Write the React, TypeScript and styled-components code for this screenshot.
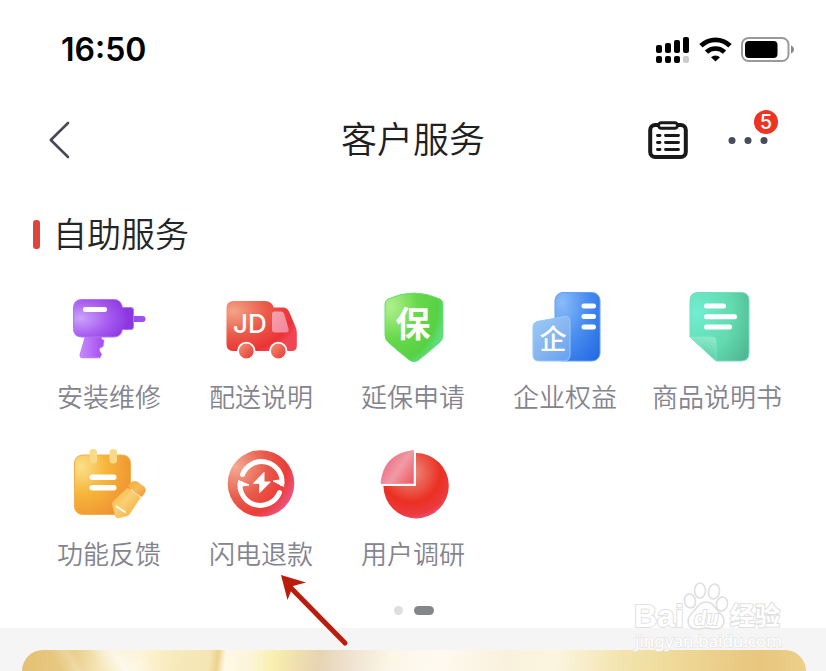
import React from "react";
import styled, { createGlobalStyle } from "styled-components";

const GlobalStyle = createGlobalStyle`
  * { box-sizing: border-box; }
  body {
    margin: 0;
    background: #f5f5f5;
    font-family: "Noto Sans CJK SC", "Noto Sans", sans-serif;
  }
  button { border: 0; padding: 0; background: none; font: inherit; color: inherit; cursor: pointer; }
  svg { display: block; overflow: visible; }
`;

const Page = styled.div`
  position: relative;
  display: flex;
  flex-direction: column;
  min-height: 100vh;
  overflow: hidden;
`;

const Sheet = styled.main`
  background: #fff;
  padding-bottom: 13px;
`;

const StatusBar = styled.div`
  display: flex;
  align-items: center;
  justify-content: space-between;
  height: 100px;
  padding: 0 31px 0 61px;
`;

const Clock = styled.time`
  font: 600 32px/40px Inter, sans-serif;
  font-feature-settings: "case";
  color: #000;
`;

const StatusIcons = styled.div`
  display: flex;
  align-items: center;
  gap: 9px;
`;

const NavBar = styled.header`
  display: grid;
  grid-template-columns: 1fr auto 1fr;
  align-items: center;
  height: 80px;
  padding: 0 48px;
`;

const BackButton = styled.button`
  justify-self: start;
`;

const Title = styled.h1`
  margin: 0;
  padding-bottom: 6px;
  font-size: 36px;
  line-height: 48px;
  font-weight: 350;
  color: #1f1f1f;
`;

const NavActions = styled.div`
  display: flex;
  align-items: center;
  justify-content: flex-end;
  gap: 40px;
  padding-right: 10px;
`;

const MoreButton = styled.button`
  position: relative;
`;

const Badge = styled.span`
  position: absolute;
  top: -26px;
  right: -10px;
  width: 24px;
  height: 24px;
  border-radius: 50%;
  background: #ee3323;
  color: #fff;
  font: 500 20px/24px Inter, sans-serif;
  text-align: center;
`;

const SectionTitle = styled.h2`
  display: flex;
  align-items: center;
  gap: 13px;
  height: 107px;
  margin: 0;
  padding: 2px 33px 0;
  font-size: 34px;
  font-weight: 350;
  line-height: 44px;
  color: #242526;

  &::before {
    content: "";
    width: 7px;
    height: 29px;
    border-radius: 3px;
    background: #e1433d;
  }
`;

const SectionText = styled.span`
  padding-bottom: 4px;
`;

const ServiceGrid = styled.div`
  display: grid;
  grid-template-columns: repeat(5, 1fr);
  row-gap: 30px;
  padding: 0 33px;
`;

const Service = styled.button`
  display: flex;
  flex-direction: column;
  align-items: center;
  gap: 11px;
`;

const ServiceLabel = styled.span`
  font-size: 26px;
  line-height: 36px;
  font-weight: 350;
  color: #84848f;
  white-space: nowrap;
`;

const Pager = styled.div`
  display: flex;
  justify-content: center;
  gap: 11px;
  margin-top: 35px;
  padding-left: 2px;
`;

const PagerDot = styled.button<{ $active?: boolean }>`
  width: ${(p) => (p.$active ? 20 : 9)}px;
  height: 9px;
  border-radius: 5px;
  background: ${(p) => (p.$active ? "#858688" : "#dedede")};
`;

const BannerArea = styled.section`
  display: flex;
  flex: 1;
  padding: 22px 20px 0 22px;
`;

const Banner = styled.div`
  flex: 1;
  min-height: 20px;
  border-radius: 22px 22px 0 0;
  background:
    linear-gradient(58deg, transparent 0 5%, #fff3 7%, transparent 8% 10%, #fff9 13%, transparent 17%),
    linear-gradient(97deg,
      #e3c173 0%, #e8ca83 6%, #f5e5b5 10%, #fcf4d5 15%, #f7e9ba 20%, #f5e5b4 24%,
      #ecd38c 25%, #fff8e5 26%, #fcf5dc 29%, #f9f0ae 32%, #efdfae 35%, #e6d4b4 38%,
      #efe3d0 42%, #fbf6e7 47%, #fffaf0 53%, #f9f1dc 62%, #fbf5df 68%,
      #f3e4b0 76%, #efdc9c 82%, #ebce89 89%, #e8c67d 94%, #edd08b 100%);
`;

const ArrowOverlay = styled.svg`
  position: absolute;
  left: 281px;
  top: 574px;
  pointer-events: none;
`;

const Watermark = styled.svg`
  position: absolute;
  right: 40px;
  top: 580px;
  pointer-events: none;
`;

const Signal = () => (
  <svg width="34" height="26" viewBox="0 0 34 26" aria-label="信号" role="img">
    <rect x="0" y="8" width="6" height="8" rx="2" />
    <rect x="9" y="6" width="6" height="10" rx="2" />
    <rect x="18" y="3" width="6" height="13" rx="2" />
    <rect x="27" y="0" width="6" height="16" rx="2" />
    <rect x="0" y="19" width="6" height="7" rx="2" />
    <rect x="9" y="19" width="6" height="7" rx="2" />
    <rect x="18" y="19" width="6" height="7" rx="2" />
    <rect x="27" y="19" width="6" height="7" rx="2" fill="#ccc" />
  </svg>
);

const Wifi = () => (
  <svg width="33" height="26" viewBox="0 0 33 26" aria-label="无线网络" role="img">
    <path d="M2 8.800a20.500 20.500 0 0 1 29 0" fill="none" stroke="#000" strokeWidth="4.800" />
    <path d="M7.500 15.200a12.800 12.800 0 0 1 18 0" fill="none" stroke="#000" strokeWidth="4.600" />
    <path d="M12 20.200a6.800 6.800 0 0 1 9 0L16.500 24.600z" />
  </svg>
);

const Battery = () => (
  <svg width="54" height="26" viewBox="0 0 54 26" aria-label="电池" role="img">
    <rect x="1" y="1" width="46.500" height="23" rx="6.500" fill="none" stroke="#999" strokeWidth="2" />
    <rect x="4" y="4" width="32.500" height="17" rx="4" />
    <path d="M50 8.500v8c4-1.500 4-6.500 0-8z" fill="#888" />
  </svg>
);

const Clipboard = () => (
  <svg width="40" height="40" viewBox="0 0 40 40" fill="none" stroke="#191919" strokeLinecap="round">
    <rect x="2.200" y="5" width="35.600" height="32" rx="5" strokeWidth="4" />
    <rect x="10.500" y="2.800" width="19" height="5.400" rx="2.700" fill="#fff" strokeWidth="3" />
    <path d="M9.500 15.500h2.500M17.500 15.500h13M9.500 22.500h2.500M17.500 22.500h13M9.500 29.500h2.500M17.500 29.500h13" strokeWidth="2.900" />
  </svg>
);

const Drill = () => (
  <>
    <defs>
      <radialGradient id="drill" cx=".12" cy=".5" r=".8">
        <stop offset="0" stopColor="#cba3fb" /><stop offset=".55" stopColor="#a95ff0" /><stop offset="1" stopColor="#8b37e1" />
      </radialGradient>
      <linearGradient id="grip" x2="1"><stop stopColor="#c98bfb" /><stop offset="1" stopColor="#a34af0" /></linearGradient>
    </defs>
    <path d="M17 47h15.500v5l2.500 1.500-1 6-3.500 1.800v2.500l2 3.500-1.500 3.500H12.500q-2-.5-1.500-3z" fill="url(#grip)" stroke="#b56ef5" strokeWidth=".8" strokeLinejoin="round" />
    <rect x="60" y="29" width="16.500" height="6" rx="3" fill="#9d50ed" />
    <path d="M13 12.500h32q7 0 8.500 8H62q2.500 0 2.500 2.500v17q0 2.500-2.500 2.500h-8.500q-1.500 7.500-8.500 7.500H13q-8.500 0-8.500-8.500V21q0-8.500 8.500-8.500z" fill="url(#drill)" stroke="#b175f6" strokeWidth="1" />
    <rect x="14" y="20" width="24" height="5" rx="2.300" fill="#fff" />
  </>
);

const Truck = () => (
  <>
    <defs>
      <radialGradient id="truck" cx=".1" cy=".2" r=".95">
        <stop offset="0" stopColor="#f3a487" /><stop offset=".5" stopColor="#ea5a48" /><stop offset=".88" stopColor="#ec3236" /><stop offset="1" stopColor="#f04552" />
      </radialGradient>
      <linearGradient id="wheel" x2="1" y2="1"><stop stopColor="#f19a78" /><stop offset="1" stopColor="#e93030" /></linearGradient>
      <linearGradient id="pane" x2="1" y2="1"><stop stopColor="#f5a3ac" /><stop offset="1" stopColor="#f3849a" /></linearGradient>
    </defs>
    <path d="M13 14h31q7 0 8.500 6.500H62q4 0 6 4L75 41q.8 2 .8 5v13q0 5-5 5H12q-6.500 0-6.500-6.500V21q0-7 7.500-7z" fill="url(#truck)" />
    <path d="M53.500 24.500h6.500q2 0 3 2l4.500 15q1 4-3 4H54q-3 0-3-3V27q0-2.500 2.500-2.500z" fill="url(#pane)" />
    <g fill="url(#wheel)" stroke="#fff" strokeWidth="1.800">
      <circle cx="25.300" cy="64" r="8.300" /><circle cx="57.300" cy="64" r="8.300" />
    </g>
    <text x="12" y="46" fill="#fff" fontFamily="Inter, sans-serif" fontSize="26" fontWeight="500">JD</text>
  </>
);

const Shield = () => (
  <>
    <defs>
      <radialGradient id="shield" cx=".1" cy=".2" r=".95">
        <stop offset="0" stopColor="#b2f08d" /><stop offset=".5" stopColor="#67d84a" /><stop offset=".85" stopColor="#57d144" /><stop offset="1" stopColor="#60dc81" />
      </radialGradient>
    </defs>
    <path d="M15 12q13-6 26-6t26 6q3 1.500 3 5v31q0 5-4 8-10 9-21 17.500-4 2.500-8 0-11-8.500-21-17.500-4-3-4-8V17q0-3.500 3-5z" fill="url(#shield)" stroke="#6bdc78" strokeWidth="1" />
    <text x="40" y="50" fill="#fff" textAnchor="middle" fontSize="35" fontWeight="700">保</text>
  </>
);

const Building = () => (
  <>
    <defs>
      <radialGradient id="tower" cx=".15" cy=".15" r="1.100">
        <stop offset="0" stopColor="#8abcf7" /><stop offset=".5" stopColor="#4b8ff0" /><stop offset="1" stopColor="#266be3" />
      </radialGradient>
      <linearGradient id="annex" x2=".8" y2="1"><stop stopColor="#9acbf8" /><stop offset=".6" stopColor="#86b4ef" /><stop offset="1" stopColor="#68a5f4" /></linearGradient>
    </defs>
    <rect x="30" y="5.500" width="45" height="68.500" rx="8" fill="url(#tower)" stroke="#64a0f4" />
    <g fill="#fff"><rect x="56.500" y="16.500" width="14.500" height="5" rx="2.500" /><rect x="56.500" y="27" width="14.500" height="5" rx="2.500" /><rect x="56.500" y="37.500" width="14.500" height="5" rx="2.500" /></g>
    <path d="M12 34.500l27-5q6-1 6 5V68q0 6-6 6H14q-6 0-6-6V40q0-4.500 4-5.500z" fill="url(#annex)" stroke="#9ac7fa" />
    <text x="28" y="62" fill="#fff" textAnchor="middle" fontSize="27" fontWeight="500">企</text>
  </>
);

const Manual = () => (
  <>
    <defs>
      <radialGradient id="manual" cx=".1" cy=".3" r="1.050">
        <stop offset="0" stopColor="#70eed2" /><stop offset=".6" stopColor="#62d9ae" /><stop offset="1" stopColor="#50b894" />
      </radialGradient>
      <linearGradient id="fold" x1=".6" x2=".4" y2="1"><stop stopColor="#8be9c8" /><stop offset="1" stopColor="#58c9a5" /></linearGradient>
    </defs>
    <path d="M21 5.500h43q8 0 8 8V66q0 8-8 8H39L13 50V13.500q0-8 8-8z" fill="url(#manual)" stroke="#70dfba" />
    <path d="M13 50h22q4 0 4 4v20z" fill="url(#fold)" stroke="#8aecd0" strokeWidth=".6" />
    <g fill="#fff"><rect x="27" y="16.500" width="22" height="5" rx="2.500" /><rect x="27" y="27.300" width="33" height="5" rx="2.500" /><rect x="27" y="37.500" width="28" height="5" rx="2.500" /></g>
  </>
);

const Feedback = () => (
  <>
    <defs>
      <radialGradient id="note" cx=".12" cy=".2" r="1">
        <stop offset="0" stopColor="#fbe08a" /><stop offset=".45" stopColor="#f6b63a" /><stop offset="1" stopColor="#ef8f31" />
      </radialGradient>
      <linearGradient id="pen" x2="1" y2="1"><stop stopColor="#f5b138" /><stop offset=".45" stopColor="#fad075" /><stop offset="1" stopColor="#f2a22b" /></linearGradient>
      <linearGradient id="cap" x2="1" y2="1"><stop stopColor="#f5aa30" /><stop offset=".5" stopColor="#f7bb5b" /><stop offset="1" stopColor="#ed9534" /></linearGradient>
    </defs>
    <rect x="5.500" y="11" width="56" height="59.500" rx="8" fill="url(#note)" stroke="#f3b04a" />
    <g fill="#f9da8b"><rect x="20.500" y="5" width="7.500" height="14.500" rx="3.500" /><rect x="40.500" y="5" width="7.500" height="14.500" rx="3.500" /></g>
    <g fill="#fff"><rect x="20.500" y="30.500" width="27" height="5.500" rx="2.700" /><rect x="20.500" y="41" width="27" height="5.500" rx="2.700" /></g>
    <path d="M58.500 44l13 9.500-11 16.500q-1 1.500-3 2l-8.500 2q-2 .2-2.500-2l-3-11q-.3-2 .8-3.500z" fill="url(#pen)" stroke="#f8c765" strokeWidth=".7" />
    <path d="M59 42l3-3.500q2.500-2.500 6-1l6.500 4.500q3.500 3 1.500 6.500L73 53q-8-4-14-11z" fill="url(#cap)" />
    <path d="M47.500 62.500l8.500 5.500" stroke="#fff" strokeWidth="1.800" strokeLinecap="round" />
  </>
);

const Refund = () => (
  <>
    <defs>
      <radialGradient id="refund" cx=".12" cy=".25" r=".95">
        <stop offset="0" stopColor="#f4aa94" /><stop offset=".5" stopColor="#e9594a" /><stop offset=".8" stopColor="#eb3d38" /><stop offset="1" stopColor="#ed5384" />
      </radialGradient>
    </defs>
    <circle cx="40" cy="39.500" r="33.300" fill="url(#refund)" />
    <g fill="none" stroke="#fff" strokeWidth="5" strokeLinecap="round">
      <path d="M21.500 30.500a20.500 20.500 0 0 1 39.500 9" />
      <path d="M58.500 48.500a20.500 20.500 0 0 1-39.500-9" />
    </g>
    <g fill="#fff" stroke="#fff" strokeLinejoin="round">
      <path d="M52 37l9.500-1.500 1.300 7z" /><path d="M28 41l-10.500-4.500v6z" />
      <path d="M43 28.500L32.500 39.300h6v9.500L49.300 38h-6.300z" />
    </g>
  </>
);

const Survey = () => (
  <>
    <defs>
      <radialGradient id="pie" cx=".42" cy=".3" r=".75">
        <stop offset="0" stopColor="#ef8f80" /><stop offset=".4" stopColor="#ea5144" /><stop offset=".6" stopColor="#eb3023" /><stop offset=".85" stopColor="#ec3a3c" /><stop offset="1" stopColor="#ee558a" />
      </radialGradient>
      <linearGradient id="slice" x1="0" y1=".3" x2="1" y2="1"><stop stopColor="#ed6583" /><stop offset=".5" stopColor="#f09ba4" /><stop offset="1" stopColor="#ef5562" /></linearGradient>
    </defs>
    <path d="M43 9a32.700 32.700 0 1 1-32.600 33H43z" fill="url(#pie)" />
    <path d="M40.500 6.500v33H8Q10 10 40.500 6.500z" fill="url(#slice)" stroke="#ec7080" strokeWidth=".6" />
  </>
);

const services = [
  { label: "安装维修", Art: Drill },
  { label: "配送说明", Art: Truck },
  { label: "延保申请", Art: Shield },
  { label: "企业权益", Art: Building },
  { label: "商品说明书", Art: Manual },
  { label: "功能反馈", Art: Feedback },
  { label: "闪电退款", Art: Refund },
  { label: "用户调研", Art: Survey },
];

export default function App() {
  return (
    <Page>
      <GlobalStyle />
      <Sheet>
        <StatusBar>
          <Clock>16:50</Clock>
          <StatusIcons><Signal /><Wifi /><Battery /></StatusIcons>
        </StatusBar>
        <NavBar>
          <BackButton aria-label="返回">
            <svg width="24" height="38" viewBox="0 0 24 38">
              <path d="M20 2L2.800 19l17.200 17" fill="none" stroke="#484956" strokeWidth="2.600" strokeLinecap="round" strokeLinejoin="round" />
            </svg>
          </BackButton>
          <Title>客户服务</Title>
          <NavActions>
            <button aria-label="服务单"><Clipboard /></button>
            <MoreButton aria-label="更多">
              <svg width="40" height="8" viewBox="0 0 40 8" fill="#484b59">
                <circle cx="4" cy="4.500" r="3.500" /><circle cx="20" cy="4.500" r="3.500" /><circle cx="36" cy="4.500" r="3.500" />
              </svg>
              <Badge>5</Badge>
            </MoreButton>
          </NavActions>
        </NavBar>
        <SectionTitle><SectionText>自助服务</SectionText></SectionTitle>
        <ServiceGrid>
          {services.map(({ label, Art }) => (
            <Service key={label}>
              <svg width="80" height="80" viewBox="0 0 80 80" aria-hidden="true"><Art /></svg>
              <ServiceLabel>{label}</ServiceLabel>
            </Service>
          ))}
        </ServiceGrid>
        <Pager>
          <PagerDot aria-label="第一页" />
          <PagerDot $active aria-label="第二页" />
        </Pager>
      </Sheet>
      <BannerArea><Banner /></BannerArea>
      <ArrowOverlay width="68" height="72" viewBox="0 0 68 72" aria-hidden="true">
        <path d="M9 13L64 69" stroke="#bb1c0c" strokeWidth="5" strokeLinecap="round" />
        <path d="M0 1L25 8.500 12 12 6.500 26z" fill="#bb1c0c" />
      </ArrowOverlay>
      <Watermark width="152" height="76" viewBox="0 0 152 76" aria-hidden="true">
        <g fill="#fff" stroke="#dfdfdf" strokeWidth="1.600">
          <ellipse cx="56" cy="21" rx="5.500" ry="7" transform="rotate(-12 56 21)" />
          <ellipse cx="66" cy="10.500" rx="5.500" ry="7.500" />
          <ellipse cx="80" cy="11.500" rx="5.500" ry="7.500" transform="rotate(10 80 11.500)" />
          <ellipse cx="88" cy="24" rx="5.500" ry="7" transform="rotate(14 88 24)" />
          <path d="M72 22c7 0 8 5 13 10 8 7 6 17-4 17-4 0-6-1-9-1s-5 1-9 1c-10 0-12-10-4-17 5-5 6-10 13-10z" />
        </g>
        <g fill="#fff" stroke="#dfdfdf" strokeWidth="2" paintOrder="stroke" fontWeight="700">
          <text x="0" y="47" fontFamily="Liberation Sans, sans-serif" fontSize="32">Bai</text>
          <text x="60" y="45" fontFamily="Liberation Sans, sans-serif" fontSize="20" fontStyle="italic">du</text>
          <text x="96" y="45" fontSize="25">经验</text>
        </g>
        <text x="1" y="67" fill="#fff" stroke="#e4e4e4" strokeWidth="1.400" paintOrder="stroke" fontFamily="Noto Sans, sans-serif" fontSize="17">jingyan.baidu.com</text>
      </Watermark>
    </Page>
  );
}
